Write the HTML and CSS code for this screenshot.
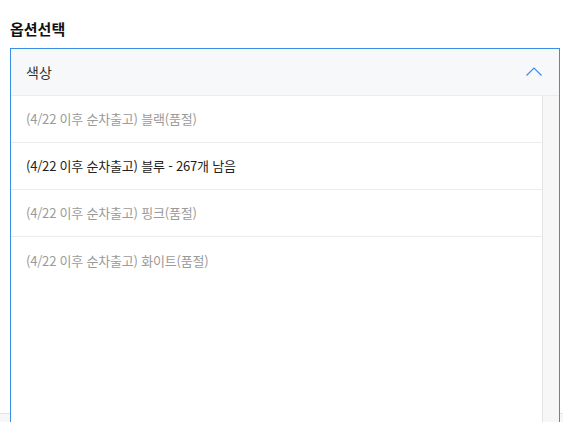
FILE: index.html
```html
<!DOCTYPE html>
<html lang="ko">
  <head>
    <meta charset="UTF-8" />
    <meta name="viewport" content="width=device-width, initial-scale=1.0" />
    <title>옵션선택</title>
    <link rel="stylesheet" href="styles.css">
  </head>
  <body>
    <div class="option-section">
      <h2 class="option-title">옵션선택</h2>

      <div class="option-select" id="optionSelect">
        <div class="select-head">
          <span class="select-label">색상</span>
          <svg class="select-arrow" width="16" height="9" viewBox="0 0 16 9">
            <polyline points="0.5,8.5 8,1 15.5,8.5" fill="none" stroke="#3a8ee6" stroke-width="1.2" />
          </svg>
        </div>
        <div class="select-body">
          <ul class="option-list">
            <li class="option-item soldout">(4/22 이후 순차출고) 블랙(품절)</li>
            <li class="option-item">(4/22 이후 순차출고) 블루 - 267개 남음</li>
            <li class="option-item soldout">(4/22 이후 순차출고) 핑크(품절)</li>
            <li class="option-item soldout">(4/22 이후 순차출고) 화이트(품절)</li>
          </ul>
          <div class="scroll-track"></div>
        </div>
      </div>
    </div>

    <div class="bottom-bar"></div>
  </body>
</html>
```

FILE: styles.css
```css
:root {
  --blue: #3a8ee6;
  --line: #ececec;
  --head-bg: #f7f8fa;
  --muted: #9a9a9a;
  --text: #222222;
  font-family: "Noto Sans CJK KR", "Noto Sans", sans-serif;
}

body {
  margin: 0;
  height: 100vh;
  background-color: #ffffff;
  color: var(--text);
  position: relative;
  overflow: hidden;
}

.option-section {
  height: 413px;
  padding: 0 10px;
  box-sizing: border-box;
}

.option-title {
  margin: 0;
  padding-top: 18px;
  height: 48px;
  box-sizing: border-box;
  font-size: 15px;
  line-height: 22px;
  font-weight: bold;
  color: #111111;
}

/* dropdown sits over the bottom bar */
.option-select {
  position: absolute;
  top: 48px;
  left: 10px;
  width: 550px;
  bottom: -1px;
  box-sizing: border-box;
  border: 1px solid var(--blue);
  background-color: #ffffff;
  display: flex;
  flex-direction: column;
  z-index: 2;
}

.select-head {
  height: 47px;
  flex-shrink: 0;
  box-sizing: border-box;
  padding: 0 17px 0 15px;
  background-color: var(--head-bg);
  border-bottom: 1px solid var(--line);
  display: flex;
  align-items: center;
  justify-content: space-between;
}

.select-label {
  font-size: 14px;
  color: #333333;
}

.select-arrow {
  margin-top: -2px;
}

.select-body {
  flex-grow: 1;
  display: flex;
}

.option-list {
  list-style: none;
  margin: 0;
  padding: 0;
  flex-grow: 1;
}

.option-item {
  height: 47px;
  box-sizing: border-box;
  padding-left: 15px;
  padding-bottom: 1px;
  border-bottom: 1px solid var(--line);
  display: flex;
  align-items: center;
  font-size: 13px;
  letter-spacing: -0.2px;
  color: var(--text);
}

.option-item.soldout {
  color: var(--muted);
}

.option-item:last-child {
  border-bottom: none;
}

.scroll-track {
  width: 16px;
  flex-shrink: 0;
  background-color: #f7f7f7;
  border-left: 1px solid #e4e4e4;
}

.bottom-bar {
  height: 9px;
  background-color: #f7f7f7;
  border-top: 1px solid #e4e4e4;
}
```
